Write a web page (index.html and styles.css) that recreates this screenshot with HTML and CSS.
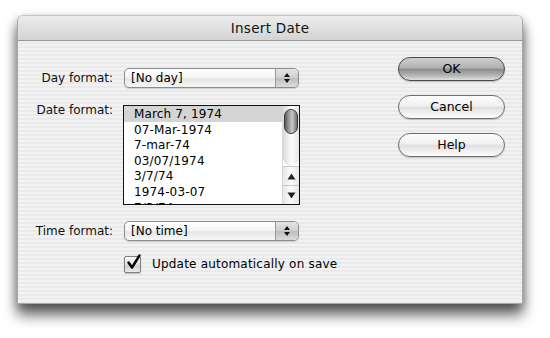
FILE: index.html
```html
<!DOCTYPE html>
<html>
<head>
<meta charset="utf-8">
<link rel="stylesheet" href="styles.css">
</head>
<body>
<div class="window">
  <div class="titlebar">Insert Date</div>
  <div class="content">
    <div class="form">
      <div class="label lbl-mid">Day format:</div>
      <div class="popup"><span class="popup-text">[No day]</span><span class="popup-arrows"><svg width="8" height="12" viewBox="0 0 8 12"><path d="M4 1 L7 5 L1 5 Z M4 11 L7 7 L1 7 Z" fill="#111"/></svg></span></div>

      <div class="label lbl-top">Date format:</div>
      <div class="listbox">
        <div class="list-items">
          <div class="item selected">March 7, 1974</div>
          <div class="item">07-Mar-1974</div>
          <div class="item">7-mar-74</div>
          <div class="item">03/07/1974</div>
          <div class="item">3/7/74</div>
          <div class="item">1974-03-07</div>
          <div class="item">7/3/74</div>
        </div>
        <div class="scrollbar">
          <div class="track"><div class="thumb"></div></div>
          <div class="arrow up"><svg width="9" height="7" viewBox="0 0 9 7"><path d="M4.5 0.5 L8.5 6.5 L0.5 6.5 Z" fill="#222"/></svg></div>
          <div class="arrow down"><svg width="9" height="7" viewBox="0 0 9 7"><path d="M4.5 6.5 L8.5 0.5 L0.5 0.5 Z" fill="#222"/></svg></div>
        </div>
      </div>

      <div class="label lbl-mid">Time format:</div>
      <div class="popup"><span class="popup-text">[No time]</span><span class="popup-arrows"><svg width="8" height="12" viewBox="0 0 8 12"><path d="M4 1 L7 5 L1 5 Z M4 11 L7 7 L1 7 Z" fill="#111"/></svg></span></div>

      <div class="spacer"></div>
      <div class="check-row">
        <span class="checkbox"><svg width="17" height="17" viewBox="0 0 17 17"><path d="M3.5 8.5 L7 13.5 L14.5 1.5" fill="none" stroke="#000" stroke-width="2.4" stroke-linejoin="round" stroke-linecap="round"/></svg></span>
        <span class="check-label">Update automatically on save</span>
      </div>
    </div>
    <div class="buttons">
      <div class="btn default">OK</div>
      <div class="btn">Cancel</div>
      <div class="btn">Help</div>
    </div>
  </div>
</div>
</body>
</html>
```

FILE: styles.css
```css
html, body {
  margin: 0;
  padding: 0;
  background: #fff;
}
body {
  height: 338px;
  box-sizing: border-box;
  overflow: hidden;
  padding: 15px 0 0 17px;
  font-family: "DejaVu Sans", "Liberation Sans", sans-serif;
  font-size: 12px;
  color: #000;
}
.window {
  width: 506px;
  height: 289px;
  box-sizing: border-box;
  border: 1px solid #a9a9a9;
  border-top-color: #c4c4c4;
  border-radius: 6px 6px 0 0;
  background: repeating-linear-gradient(to bottom, #f2f2f2 0, #f2f2f2 2px, #eaeaea 2px, #eaeaea 4px);
  box-shadow: 0 11px 14px rgba(0,0,0,0.6), 0 3px 10px rgba(0,0,0,0.25);
  overflow: hidden;
}
.titlebar {
  height: 24px;
  line-height: 25px;
  text-align: center;
  font-size: 13.5px;
  letter-spacing: 0.3px;
  background: linear-gradient(to bottom, #ececec, #d4d4d4);
  border-bottom: 1px solid #979797;
  color: #111;
}
.content {
  display: flex;
  justify-content: space-between;
  padding: 16px 17px 0 16px;
}
.form {
  display: grid;
  grid-template-columns: 79px 177px;
  column-gap: 10px;
  align-items: start;
  padding-top: 11px;
}
.label {
  text-align: right;
  color: #111;
}
.lbl-mid {
  line-height: 20px;
}
.lbl-top {
  margin-top: 15px;
  line-height: 14px;
}
.popup {
  height: 20px;
  box-sizing: border-box;
  margin-left: 1px;
  width: 175px;
  border: 1px solid #8c8c8c;
  border-radius: 5px;
  background: linear-gradient(to bottom, #ffffff 0%, #f6f6f6 45%, #e6e6e6 55%, #f7f7f7 100%);
  display: flex;
  align-items: stretch;
  box-shadow: 0 1px 1px rgba(0,0,0,0.15);
}
.popup-text {
  flex: 1;
  padding-left: 6px;
  line-height: 18px;
}
.popup-arrows {
  width: 22px;
  border-left: 1px solid #9a9a9a;
  border-radius: 0 4px 4px 0;
  background: linear-gradient(to bottom, #e4e4e4 0%, #cfcfcf 50%, #bdbdbd 51%, #dcdcdc 100%);
  display: flex;
  align-items: center;
  justify-content: center;
}
.listbox {
  grid-column: 2;
  margin-top: 17px;
  height: 100px;
  box-sizing: border-box;
  border: 1px solid #111;
  background: #fff;
  display: flex;
  margin-bottom: 16px;
}
.list-items {
  flex: 1;
  overflow: hidden;
}
.item {
  height: 15.6px;
  line-height: 16px;
  padding-left: 10px;
  white-space: nowrap;
  letter-spacing: 0.15px;
}
.item.selected {
  background: #d4d4d4;
}
.scrollbar {
  width: 16px;
  display: flex;
  flex-direction: column;
  border-left: 1px solid #d8d8d8;
}
.track {
  flex: 1;
  background: linear-gradient(to right, #d9d9d9, #f4f4f4 40%, #fbfbfb 60%, #e4e4e4);
  padding: 3px 1px 0 1px;
  border-radius: 0 0 8px 8px;
}
.thumb {
  height: 25px;
  box-sizing: border-box;
  border: 1.5px solid #3a3a3a;
  border-radius: 7px;
  background: linear-gradient(to right, #5e5e5e, #a0a0a0 35%, #c8c8c8 60%, #707070);
}
.arrow {
  height: 18px;
  display: flex;
  align-items: center;
  justify-content: center;
  background: linear-gradient(to right, #e6e6e6, #fbfbfb 50%, #e6e6e6);
  border-top: 1px solid #c8c8c8;
}
.spacer {
  height: 14px;
  grid-column: 1 / 3;
}
.check-row {
  grid-column: 2;
  display: flex;
  align-items: center;
  margin-left: 1px;
  white-space: nowrap;
  width: 260px;
}
.checkbox {
  flex-shrink: 0;
  width: 17px;
  height: 17px;
  box-sizing: border-box;
  border: 1px solid #7e7e7e;
  border-radius: 2px;
  background: linear-gradient(to bottom, #fefefe, #d9d9d9 55%, #cfcfcf 60%, #ececec);
  position: relative;
  display: inline-block;
  box-shadow: 0 1px 1px rgba(0,0,0,0.2);
}
.checkbox svg {
  position: absolute;
  left: 0;
  top: -3px;
}
.check-label {
  margin-left: 11px;
  line-height: 18px;
  letter-spacing: 0.2px;
}
.buttons {
  display: flex;
  flex-direction: column;
  gap: 14px;
}
.btn {
  width: 107px;
  height: 24px;
  box-sizing: border-box;
  border: 1px solid #6e6e6e;
  border-radius: 12px;
  text-align: center;
  line-height: 21px;
  font-size: 12.5px;
  background: linear-gradient(to bottom, #fdfdfd 0%, #f0f0f0 45%, #e0e0e0 52%, #f4f4f4 85%, #ffffff 100%);
  box-shadow: 0 1px 1px rgba(0,0,0,0.2);
}
.btn.default {
  border-color: #4a4a4a;
  background: linear-gradient(to bottom, #cfcfcf 0%, #b0b0b0 45%, #8c8c8c 52%, #b6b6b6 80%, #e0e0e0 100%);
}
```
